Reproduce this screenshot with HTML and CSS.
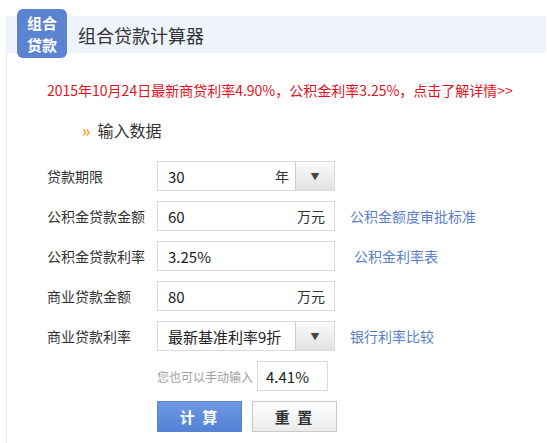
FILE: index.html
```html
<!DOCTYPE html>
<html lang="zh-CN">
<head>
<meta charset="utf-8">
<title>组合贷款计算器</title>
<link rel="stylesheet" href="styles.css">
</head>
<body>
<div class="page">
  <div class="header">
    <div class="logo"><span>组合</span><span>贷款</span></div>
    <div class="title">组合贷款计算器</div>
  </div>
  <div class="content">
    <div class="notice">2015年10月24日最新商贷利率4.90%，公积金利率3.25%，点击了解详情&gt;&gt;</div>
    <div class="section-title"><span class="chev">»</span>输入数据</div>
    <div class="form">
      <div class="row">
        <div class="label">贷款期限</div>
        <div class="box select">
          <span class="val">30</span><span class="unit">年</span>
          <span class="drop">▼</span>
        </div>
      </div>
      <div class="row">
        <div class="label">公积金贷款金额</div>
        <div class="box"><span class="val">60</span><span class="unit">万元</span></div>
        <a class="link">公积金额度审批标准</a>
      </div>
      <div class="row">
        <div class="label">公积金贷款利率</div>
        <div class="box"><span class="val">3.25%</span></div>
        <a class="link link-shift">公积金利率表</a>
      </div>
      <div class="row">
        <div class="label">商业贷款金额</div>
        <div class="box"><span class="val">80</span><span class="unit">万元</span></div>
      </div>
      <div class="row">
        <div class="label">商业贷款利率</div>
        <div class="box select">
          <span class="val">最新基准利率9折</span>
          <span class="drop">▼</span>
        </div>
        <a class="link">银行利率比较</a>
      </div>
      <div class="row hint-row">
        <div class="label"></div>
        <span class="hint">您也可以手动输入</span>
        <div class="box small"><span class="val">4.41%</span></div>
      </div>
      <div class="row">
        <div class="label"></div>
        <button class="btn primary">计 算</button>
        <button class="btn secondary">重 置</button>
      </div>
    </div>
  </div>
</div>
</body>
</html>
```
FILE: styles.css
```css
* { box-sizing: border-box; }
html, body { margin: 0; padding: 0; background: #fff; }
body {
  font-family: "Noto Sans CJK SC", "Noto Sans", "Liberation Sans", sans-serif;
  color: #333;
  width: 547px;
  height: 443px;
  overflow: hidden;
}
.page { padding-top: 16px; }
.header {
  margin-left: 6px;
  width: 540px;
  height: 37px;
  background: #eff4fc;
  display: flex;
  align-items: center;
}
.logo {
  margin-left: 11px;
  margin-top: -2px;
  width: 50px;
  height: 49px;
  flex: none;
  background: #5b83cf;
  border-radius: 6px;
  color: #fff;
  font-weight: bold;
  font-size: 15px;
  line-height: 22px;
  display: flex;
  flex-direction: column;
  align-items: center;
  justify-content: center;
}
.title {
  margin-left: 11px;
  font-size: 18px;
  color: #333;
}
.content {
  margin-left: 6px;
  border-left: 1px solid #e9e9e9;
  height: 390px;
  padding-left: 40px;
}
.notice {
  padding-top: 27px;
  line-height: 20px;
  font-size: 14px;
  color: #e5101c;
  white-space: nowrap;
}
.section-title {
  margin-top: 20px;
  padding-left: 35px;
  line-height: 20px;
  font-size: 16px;
  color: #333;
  display: flex;
  align-items: center;
}
.chev {
  color: #f0a030;
  font-weight: bold;
  font-size: 16px;
  margin-right: 7px;
}
.form {
  margin-top: 21px;
  display: flex;
  flex-direction: column;
  gap: 10px;
}
.row {
  display: flex;
  align-items: center;
  height: 30px;
}
.label {
  width: 110px;
  flex: none;
  font-size: 14px;
  color: #333;
}
.box {
  width: 178px;
  height: 30px;
  border: 1px solid #dadada;
  background: #fff;
  display: flex;
  align-items: center;
  padding: 0 9px 0 10px;
  flex: none;
}
.box .val {
  flex: 1;
  font-size: 15px;
  color: #222;
  white-space: nowrap;
}
.box .unit {
  font-size: 14px;
  color: #333;
}
.select { padding-right: 0; }
.select .unit { margin-right: 6px; }
.drop {
  width: 39px;
  height: 28px;
  flex: none;
  border-left: 1px solid #cfcfcf;
  background: linear-gradient(#fafafa, #e2e2e2);
  color: #444;
  font-size: 9px;
  display: flex;
  align-items: center;
  justify-content: center;
}
.link {
  margin-left: 15px;
  font-size: 14px;
  color: #5c80c8;
  white-space: nowrap;
}
.link-shift { margin-left: 19px; }
.hint {
  font-size: 12px;
  color: #a0a0a0;
  width: 100px;
  flex: none;
}
.box.small { width: 71px; padding-left: 8px; }
.btn {
  width: 85px;
  height: 31px;
  font-family: inherit;
  font-size: 15px;
  font-weight: bold;
  padding: 0;
  cursor: pointer;
  flex: none;
  letter-spacing: 2px;
}
.primary {
  background: linear-gradient(#6d98e3, #5582d6);
  border: 1px solid #5a85d3;
  color: #fff;
}
.secondary {
  margin-left: 10px;
  background: linear-gradient(#ffffff, #ebebeb);
  border: 1px solid #c9c9c9;
  color: #333;
}
```
